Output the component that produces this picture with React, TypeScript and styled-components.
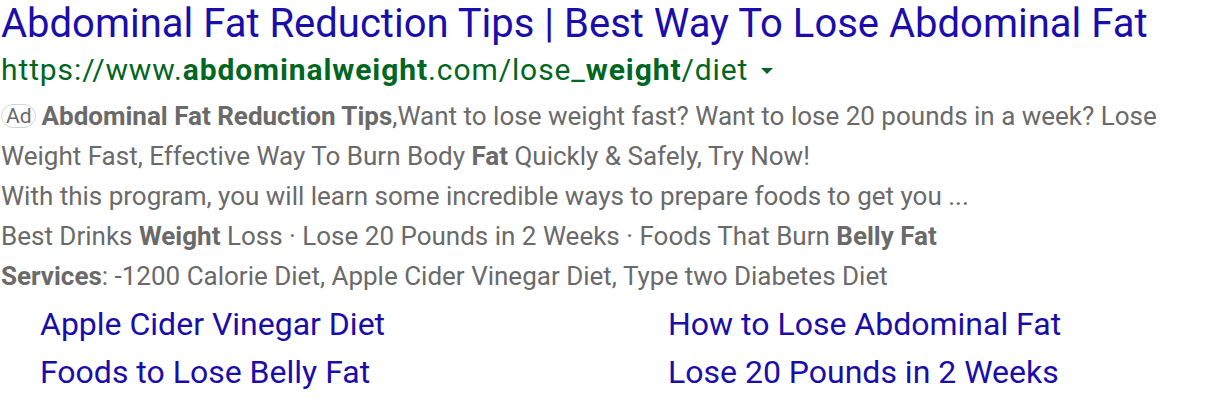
import React from "react";
import styled, { createGlobalStyle } from "styled-components";

const Global = createGlobalStyle`
  html, body { margin: 0; padding: 0; background: #fff; }
  body { font-family: Roboto, Arial, sans-serif; }
`;

const Result = styled.div`
  display: flex;
  flex-direction: column;
  padding: 0 0 0 1px;
  width: 1216px;
  box-sizing: border-box;
`;

const Title = styled.a`
  color: #1a0dab;
  font-size: 40px;
  line-height: 48px;
  text-decoration: none;
  white-space: nowrap;
`;

const UrlRow = styled.div`
  display: flex;
  align-items: center;
  color: #006621;
  font-size: 30px;
  letter-spacing: 0.9px;
  line-height: 44px;
  margin-bottom: 4px;
  white-space: nowrap;
`;

const Caret = styled.span`
  display: inline-block;
  width: 0;
  height: 0;
  margin-left: 13px;
  margin-top: 2px;
  border-left: 6px solid transparent;
  border-right: 6px solid transparent;
  border-top: 6px solid #006621;
`;

const Desc = styled.div`
  color: #6a6a6a;
  font-size: 26px;
  line-height: 40px;
  white-space: nowrap;
  b { font-weight: 700; }
`;

const AdBadge = styled.span`
  display: inline-block;
  border: 1px solid #d4d4d4;
  border-radius: 12px;
  padding: 0 3px 0 4px;
  line-height: 22px;
  margin-right: 6px;
  color: #6a6a6a;
  font-size: 21px;
  vertical-align: 2px;
`;

const Sitelinks = styled.div`
  display: grid;
  grid-template-columns: 628px 1fr;
  padding: 4px 0 0 39px;
`;

const Sitelink = styled.a`
  color: #1a0dab;
  font-size: 32px;
  line-height: 48px;
  text-decoration: none;
  white-space: nowrap;
`;

export default function App() {
  return (
    <>
      <Global />
      <Result>
        <Title href="#">Abdominal Fat Reduction Tips | Best Way To Lose Abdominal Fat</Title>
        <UrlRow>
          <span>
            https://www.<b>abdominalweight</b>.com/lose_<b>weight</b>/diet
          </span>
          <Caret />
        </UrlRow>
        <Desc>
          <AdBadge>Ad</AdBadge>
          <b>Abdominal Fat Reduction Tips</b>,Want to lose weight fast? Want to lose 20 pounds in a week? Lose
        </Desc>
        <Desc>
          Weight Fast, Effective Way To Burn Body <b>Fat</b> Quickly &amp; Safely, Try Now!
        </Desc>
        <Desc>With this program, you will learn some incredible ways to prepare foods to get you ...</Desc>
        <Desc>
          Best Drinks <b>Weight</b> Loss · Lose 20 Pounds in 2 Weeks · Foods That Burn <b>Belly Fat</b>
        </Desc>
        <Desc>
          <b>Services</b>: -1200 Calorie Diet, Apple Cider Vinegar Diet, Type two Diabetes Diet
        </Desc>
        <Sitelinks>
          <Sitelink href="#">Apple Cider Vinegar Diet</Sitelink>
          <Sitelink href="#">How to Lose Abdominal Fat</Sitelink>
          <Sitelink href="#">Foods to Lose Belly Fat</Sitelink>
          <Sitelink href="#">Lose 20 Pounds in 2 Weeks</Sitelink>
        </Sitelinks>
      </Result>
    </>
  );
}
